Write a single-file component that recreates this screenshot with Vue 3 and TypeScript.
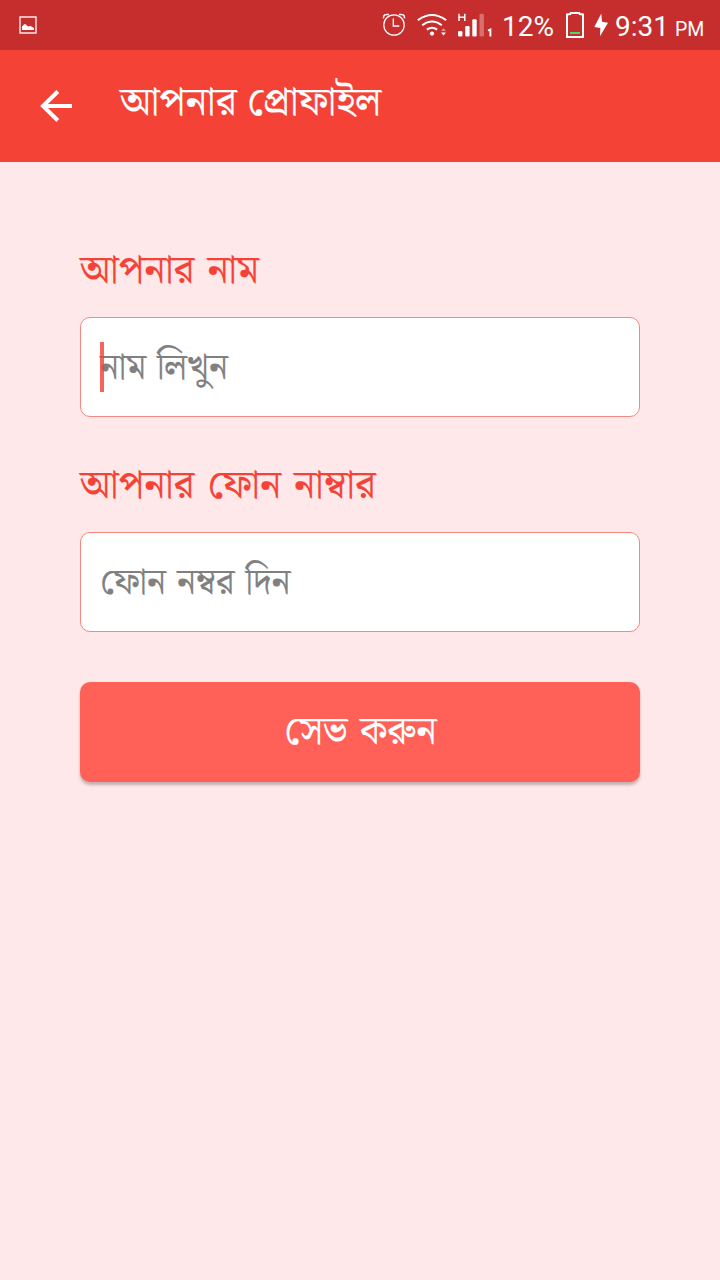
<script setup lang="ts">
import { ref } from 'vue'

interface Field {
  id: string
  label: string
  hint: string
  focused: boolean
}

const fields: Field[] = [
  { id: 'name', label: 'আপনার নাম', hint: 'নাম লিখুন', focused: true },
  { id: 'phone', label: 'আপনার ফোন নাম্বার', hint: 'ফোন নম্বর দিন', focused: false },
]
const values = ref<Record<string, string>>({ name: '', phone: '' })
</script>

<template>
  <main class="screen">
    <header class="status">
      <svg class="photo" width="18" height="18" viewBox="0 0 18 18">
        <path fill="none" stroke="#fff" stroke-opacity=".9" stroke-width="1.4" d="M1 1h16v16H1z" />
        <path fill="#fff" d="M3 14v-3.5l2-2 1-.5 1.5 1L9 10.5l2-.5 1.5.5L15 12v2z" />
      </svg>
      <div class="right">
        <svg class="alarm" width="24" height="50" viewBox="382 0 24 50" fill="none" stroke="#fff">
          <circle cx="394" cy="25" r="10.2" stroke-width="1.2" />
          <path stroke-width="1.3" d="M393.3 18.5V26h6" />
          <path stroke-width="1.5" d="M383.5 18.3c-.4-3.3 2-4.4 5.5-3.7M404.5 18.3c.4-3.3-2-4.4-5.5-3.7" />
        </svg>
        <svg class="wifi" width="30" height="50" viewBox="417 0 30 50" fill="none" stroke="#fff" stroke-width="2">
          <path d="M417.8 20.2q14.2-10.6 28.4 0M422.2 25.2q9.8-7.4 19.6 0M426.8 29.6q5.2-3.6 10.4 0" />
          <circle cx="432" cy="33.6" r="2.1" fill="#fff" stroke="none" />
          <path fill="#fff" fill-opacity=".45" stroke="none" d="M441 31l2.5-3 2.5 3z" />
          <path fill="#fff" stroke="none" d="M441 32.5h5l-2.5 3z" />
        </svg>
        <svg class="signal" width="35" height="50" viewBox="458 0 35 50" fill="#fff">
          <path fill="none" stroke="#fff" stroke-width="1.5" d="M459 13.7v7.3M464.8 13.7v7.3M459 17.3h5.8" />
          <rect x="458" y="31" width="4.4" height="5.5" rx="1.2" />
          <rect x="465.2" y="26" width="4.4" height="10.5" rx="1.2" />
          <rect x="472.3" y="19.3" width="4.4" height="17.2" rx="1.2" />
          <rect x="479.5" y="13.8" width="4.4" height="22.7" rx="1.2" fill-opacity=".32" />
          <path fill="none" stroke="#fff" stroke-width="1.9" d="M488 30.6l2.4-1.1v7" />
        </svg>
        <span class="pct">12%</span>
        <svg class="battery" width="18" height="50" viewBox="566 0 18 50">
          <path fill="none" stroke="#fff" stroke-width="2" d="M567 14.5l3.3-.4.4-1.1h8.6l.4 1.1 3.3.4V37h-16z" />
          <path fill="#4bd863" d="M570 32h10v2h-10z" />
        </svg>
        <svg class="bolt" width="14" height="50" viewBox="594 0 14 50">
          <path fill="#fff" d="M601.3 13.5L594.3 27l6 1-.3 8.2 8-13.4-6-1z" />
        </svg>
        <span class="time">9:31</span><small>PM</small>
      </div>
    </header>

    <div class="bar">
      <svg class="back" width="32" height="32" viewBox="0 0 32 32">
        <path fill="none" stroke="#fff" stroke-width="4" d="M32 16H4M17.8 1.5L3 16l14.8 14.5" />
      </svg>
      <h1>আপনার প্রোফাইল</h1>
    </div>

    <form class="form" @submit.prevent>
      <div v-for="f in fields" :key="f.id" class="field">
        <label :for="f.id">{{ f.label }}</label>
        <div class="box">
          <input :id="f.id" v-model="values[f.id]" />
          <span v-if="!values[f.id]" class="hint">{{ f.hint }}</span>
          <i v-if="f.focused" class="caret"></i>
        </div>
      </div>
      <button type="submit"><span>সেভ করুন</span></button>
    </form>
  </main>
</template>

<style scoped>
.screen {
  height: 1280px;
  background: #ffe8ea;
  font-family: Roboto, "Noto Serif Bengali", "Noto Sans Bengali", sans-serif;
}
.status {
  height: 50px;
  background: #c62d2d;
  color: #fff;
  display: flex;
  align-items: center;
  justify-content: space-between;
  padding: 0 16px 0 19px;
}
.right { display: flex; align-items: baseline; height: 50px; }
.right svg { display: block; align-self: flex-start; }
.wifi { margin-left: 11px; }
.signal { margin-left: 11px; }
.pct { width: 64px; margin-left: 9px; font-size: 28px; line-height: 53px; }
.bolt { margin-left: 10px; }
.time { width: 60px; margin-left: 7px; font-size: 28px; line-height: 53px; }
small { width: 29px; font-size: 19.5px; }
.bar {
  height: 112px;
  background: #f44336;
  color: #fff;
  display: flex;
  padding-left: 40px;
}
.back { margin-top: 40px; }
h1 {
  margin: 21px 0 0 48px;
  font-weight: 400;
  font-size: 40px;
  line-height: 62px;
  transform: scaleX(1.027);
  transform-origin: left;
  white-space: nowrap;
  -webkit-text-stroke: .15px;
}
.form { padding: 75px 80px 0; }
.field { height: 215px; }
label {
  display: block;
  width: max-content;
  height: 80px;
  color: #f44336;
  font-size: 40px;
  line-height: 66px;
  word-spacing: 3px;
  transform: scaleX(1.006);
  transform-origin: left;
  -webkit-text-stroke: .15px;
}
.box {
  position: relative;
  box-sizing: border-box;
  height: 100px;
  border: 1px solid #f8877f;
  border-radius: 10px;
  background: #fff;
}
input {
  box-sizing: border-box;
  width: 100%;
  height: 100%;
  border: 0;
  outline: 0;
  background: none;
  padding: 0 19px;
  font: inherit;
  font-size: 36px;
}
.hint {
  position: absolute;
  left: 19px;
  top: 0;
  color: #808080;
  font-size: 36px;
  line-height: 98px;
  word-spacing: 2px;
  transform: scaleX(1);
  transform-origin: left;
  white-space: nowrap;
  pointer-events: none;
  -webkit-text-stroke: .15px;
}
.caret {
  position: absolute;
  left: 19px;
  top: 24px;
  width: 4px;
  height: 50px;
  background: rgba(244, 67, 54, .82);
}
button {
  display: block;
  width: 100%;
  height: 100px;
  margin-top: 15px;
  padding: 0;
  border: 0;
  background: #ff6159;
  border-radius: 10px;
  box-shadow: 0 3px 3px rgba(80, 50, 50, .32);
  color: #fff;
  font: inherit;
  font-size: 40px;
}
button span { display: inline-block; word-spacing: 3px; transform: scaleX(.97); -webkit-text-stroke: .15px; }
</style>
